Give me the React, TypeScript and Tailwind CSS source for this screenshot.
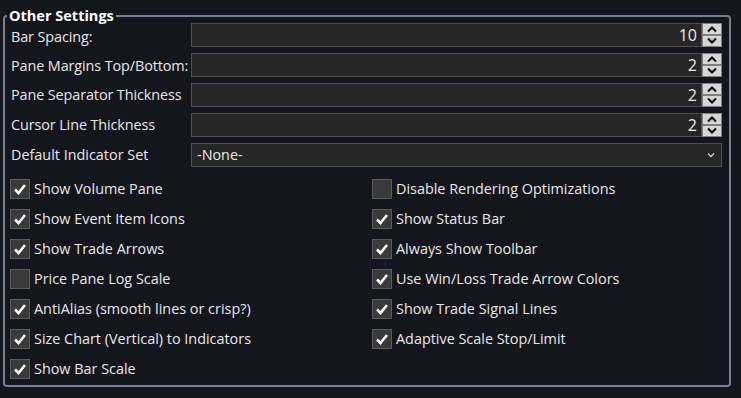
import React from "react";

const font = { fontFamily: '"Open Sans", "Noto Sans", sans-serif' };

function Spinner() {
  return (
    <div className="flex w-[20px] flex-col">
      {["up", "down"].map((d) => (
        <div
          key={d}
          className="flex h-[12px] items-center justify-center border border-[#808080] bg-[#d6d6d6]"
        >
          <svg width="12" height="8" viewBox="0 0 12 8">
            <polyline
              points={d === "up" ? "2,6.5 6,2.5 10,6.5" : "2,1.5 6,5.5 10,1.5"}
              fill="none"
              stroke="#111"
              strokeWidth="2.2"
            />
          </svg>
        </div>
      ))}
    </div>
  );
}

function NumberRow({ label, value, pad = "" }: { label: string; value: string; pad?: string }) {
  return (
    <div className="flex h-[24px] items-center">
      <div className={`w-[180px] shrink-0 tracking-[-0.1px] ${pad}`}>{label}</div>
      <div className="flex h-full flex-1">
        <div className="flex flex-1 items-center justify-end border border-[#505050] bg-[#262626] pr-[4px] text-[16px] text-[#ececec]">
          {value}
        </div>
        <Spinner />
      </div>
    </div>
  );
}

function Check({ label, checked }: { label: string; checked: boolean }) {
  return (
    <div className="flex h-[30px] items-center">
      <div className="flex h-[20px] w-[20px] items-center justify-center border border-[#5a5a5a] bg-[#3a3a3a]">
        {checked && (
          <svg width="14" height="12" viewBox="0 0 14 12">
            <polyline points="2,6.5 5.5,10 12,2" fill="none" stroke="#fff" strokeWidth="2.6" />
          </svg>
        )}
      </div>
      <span className="ml-[4px]">{label}</span>
    </div>
  );
}

const left: [string, boolean][] = [
  ["Show Volume Pane", true],
  ["Show Event Item Icons", true],
  ["Show Trade Arrows", true],
  ["Price Pane Log Scale", false],
  ["AntiAlias (smooth lines or crisp?)", true],
  ["Size Chart (Vertical) to Indicators", true],
  ["Show Bar Scale", true],
];

const right: [string, boolean][] = [
  ["Disable Rendering Optimizations", false],
  ["Show Status Bar", true],
  ["Always Show Toolbar", true],
  ["Use Win/Loss Trade Arrow Colors", true],
  ["Show Trade Signal Lines", true],
  ["Adaptive Scale Stop/Limit", true],
];

export default function App() {
  return (
    <div className="h-[398px] w-[741px] bg-[#15151e] pt-[15px] text-[14.4px] text-[#e8e8e8]" style={font}>
      <div className="relative ml-[3px] h-[372px] w-[728px] rounded-[4px] border-2 border-[#748090] pl-[6px] pr-[7px] pt-[6px]">
        <div className="absolute left-[2px] top-[-11px] bg-[#15151e] px-[2px] text-[14.5px] font-bold leading-[20px] text-white">
          Other Settings
        </div>
        <div className="flex flex-col gap-[6px]">
          <NumberRow label="Bar Spacing:" value="10" pad="pt-[3px]" />
          <NumberRow label="Pane Margins Top/Bottom:" value="2" pad="pt-[1px]" />
          <NumberRow label="Pane Separator Thickness" value="2" />
          <NumberRow label="Cursor Line Thickness" value="2" />
          <div className="flex h-[24px] items-center">
            <div className="w-[180px] shrink-0">Default Indicator Set</div>
            <div className="flex h-full flex-1 items-center justify-between border border-[#505050] bg-[#262626] pl-[5px] pr-[6px]">
              <span>-None-</span>
              <svg width="8" height="6" viewBox="0 0 8 6">
                <polyline points="1,1.5 4,4.5 7,1.5" fill="none" stroke="#ccc" strokeWidth="1.3" />
              </svg>
            </div>
          </div>
        </div>
        <div className="-ml-[1px] mt-[7px] grid grid-cols-[362px_1fr]">
          <div className="flex flex-col">
            {left.map(([l, c]) => (
              <Check key={l} label={l} checked={c} />
            ))}
          </div>
          <div className="flex flex-col">
            {right.map(([l, c]) => (
              <Check key={l} label={l} checked={c} />
            ))}
          </div>
        </div>
      </div>
    </div>
  );
}
